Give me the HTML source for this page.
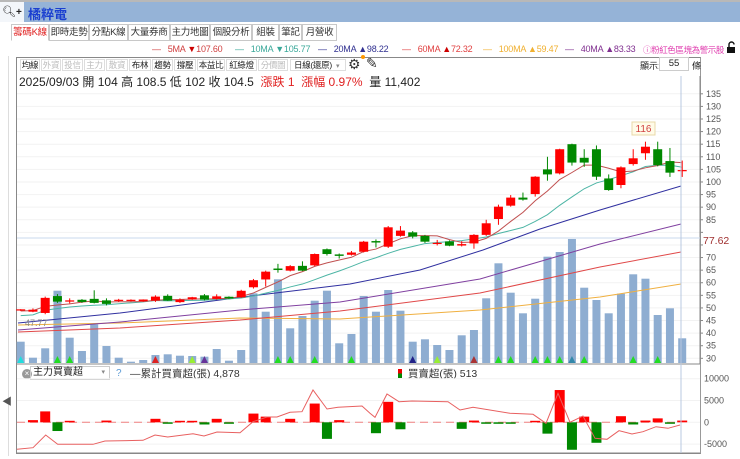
<!DOCTYPE html>
<html><head><meta charset="utf-8"><style>
*{margin:0;padding:0;box-sizing:border-box}
body{width:740px;height:459px;overflow:hidden;background:#fff;font-family:"Liberation Sans","Noto Sans CJK TC",sans-serif;position:relative;color:#222}
.a{position:absolute;white-space:nowrap}
.tab{position:absolute;top:24px;height:17px;border:1px solid #c8c8c8;font-size:9.5px;line-height:15px;text-align:center;background:#fff;color:#333;white-space:nowrap;overflow:hidden;letter-spacing:-0.3px}
.btn{position:absolute;top:59px;height:12px;border:1px solid #ddd;font-size:8.5px;line-height:10px;text-align:center;color:#222;white-space:nowrap;overflow:hidden;letter-spacing:-0.3px}
.g{color:#bbb}
.lg{position:absolute;top:44px;font-size:9px;white-space:nowrap;letter-spacing:-0.2px}
</style></head><body>
<div class="a" style="left:0;top:0;width:740px;height:2px;background:#b8b8b8"></div>
<div class="a" style="left:0;top:2px;width:740px;height:20px;background:#95b3d7"></div>
<div class="a" style="left:0;top:2px;width:24px;height:20px;background:#f3f6fa;font-size:11px;line-height:20px;padding-left:2px">🔍︎<b style="font-size:10px">+</b></div>
<div class="a" style="left:28px;top:4px;font-size:13px;font-weight:bold;color:#1a3fd0">橘粹電</div>

<div class="tab" style="left:11px;width:38px;color:#e02020;border-bottom-color:#fff">籌碼K線</div>
<div class="tab" style="left:49px;width:40px">即時走勢</div>
<div class="tab" style="left:89px;width:39px">分點K線</div>
<div class="tab" style="left:128px;width:42px">大量券商</div>
<div class="tab" style="left:170px;width:40px">主力地圖</div>
<div class="tab" style="left:210px;width:42px">個股分析</div>
<div class="tab" style="left:252px;width:27px">組裝</div>
<div class="tab" style="left:279px;width:23px">筆記</div>
<div class="tab" style="left:302px;width:35px">月營收</div>

<div class="lg" style="left:152px;color:#d04040">—&nbsp;&nbsp; 5MA <span style="color:#c00">▼</span>107.60</div>
<div class="lg" style="left:235px;color:#3aa89a">—&nbsp;&nbsp; 10MA ▼105.77</div>
<div class="lg" style="left:318px;color:#303090">—&nbsp;&nbsp; 20MA ▲98.22</div>
<div class="lg" style="left:402px;color:#e04040">—&nbsp;&nbsp; 60MA <span style="color:#c00">▲</span>72.32</div>
<div class="lg" style="left:483px;color:#f0b030">—&nbsp;&nbsp; 100MA ▲59.47</div>
<div class="lg" style="left:565px;color:#803090">—&nbsp;&nbsp; 40MA ▲83.33</div>
<div class="lg" style="left:643px;color:#e040b0;font-size:8.5px;letter-spacing:-0.4px">ⓘ粉紅色區塊為警示股</div>
<svg class="a" style="left:725px;top:41px" width="12" height="12"><path d="M4 6V3.5a2.5 2.5 0 0 1 5 0" fill="none" stroke="#111" stroke-width="1.4"/><rect x="2" y="6" width="8" height="6" fill="#111"/></svg>

<div class="a" style="left:8px;top:56px;width:1px;height:400px;background:#ddd"></div>
<div class="a" style="left:16px;top:57px;width:685px;height:397px;border:1px solid #888;border-right-color:#999"></div>
<div class="a" style="left:2px;top:393px;font-size:10px;color:#555">◀</div>

<div class="btn" style="left:20px;width:20px">均線</div>
<div class="btn g" style="left:41px;width:20px">外資</div>
<div class="btn g" style="left:62px;width:21px">投信</div>
<div class="btn g" style="left:84px;width:21px">主力</div>
<div class="btn g" style="left:106px;width:22px">散資</div>
<div class="btn" style="left:129px;width:22px">布林</div>
<div class="btn" style="left:152px;width:21px">趨勢</div>
<div class="btn" style="left:174px;width:22px">撐壓</div>
<div class="btn" style="left:197px;width:28px">本益比</div>
<div class="btn" style="left:226px;width:31px">紅綠燈</div>
<div class="btn g" style="left:258px;width:30px">分價圖</div>
<div class="btn" style="left:290px;width:56px;text-align:left;padding-left:3px">日線(還原)&nbsp;&nbsp;<span style="font-size:7px;color:#888">▾</span></div>
<div class="a" style="left:348px;top:56px;font-size:14px;color:#333">⚙</div>
<div class="a" style="left:361px;top:55px;width:4px;height:4px;border-radius:2px;background:#f90"></div>
<div class="a" style="left:366px;top:55px;font-size:14px;color:#333">✎</div>
<div class="a" style="left:640px;top:59px;font-size:9px">顯示:</div>
<div class="a" style="left:659px;top:57px;width:30px;height:14px;border:1px solid #ccc;font-size:9.5px;text-align:center;line-height:12px">55</div>
<div class="a" style="left:692px;top:59px;font-size:9px">條</div>

<div class="a" style="left:19px;top:73px;font-size:12px">2025/09/03 開 104 高 108.5 低 102 收 104.5 &nbsp;<span style="color:#e02020">漲跌 1 &nbsp;漲幅 0.97%</span>&nbsp; 量 11,402</div>

<div class="a" style="left:22px;top:369px;width:10px;height:10px;border-radius:5px;background:#999;color:#fff;font-size:8px;line-height:10px;text-align:center">×</div>
<div class="a" style="left:30px;top:366px;width:80px;height:14px;border:1px solid #ccc;font-size:10px;line-height:12px;padding-left:2px">主力買賣超<span style="position:absolute;right:4px;font-size:7px;color:#888">▾</span></div>
<div class="a" style="left:116px;top:368px;font-size:10px;color:#5b9bd5">?</div>
<div class="a" style="left:130px;top:366px;font-size:10.5px;color:#333">—累計買賣超(張) 4,878</div>
<div class="a" style="left:398px;top:366px;font-size:10.5px;color:#333"><span style="display:inline-block;width:4px;height:9px;background:linear-gradient(#e00 50%,#080 50%);vertical-align:-1px"></span>&nbsp;&nbsp;買賣超(張) 513</div>

<svg id="s" class="a" style="left:0;top:0" width="740" height="459"></svg>
<script>
var O=[[49.2,49.5,48.8,49.2],[48.5,49.8,48.3,49.3],[48,54.5,47.5,54],[54.7,55.5,52,52.5],[52.5,53.8,51.8,53],[53,53.5,52,52.6],[53.6,57,51.8,52],[53,53.8,51,51.6],[53,53.6,52.4,53],[53,53.4,52.6,53],[52.9,53.4,52.5,53.1],[52.9,55,52.4,54.5],[54.8,55.4,52.8,52.9],[52.3,53.8,52,53.3],[53.6,54.4,53.2,54],[55,55.5,53,53.3],[53.6,55.4,53.3,54.6],[54.2,54.6,53.6,54],[54.2,57.2,54,56.8],[58.2,61.5,57.7,61],[61.3,64.8,58.5,64.4],[65.4,67.5,64,65.3],[64.8,67,64.5,66.6],[66.7,68.5,64.6,64.8],[66.9,71.6,66.6,71.4],[73.3,73.6,70.8,71.4],[71,71.6,69.6,70.9],[71.1,72.6,70.8,72],[72.3,76.6,72,76.3],[76.3,77.2,74,76.2],[74.3,82.5,73.8,82],[78.6,82.5,78.3,80.7],[80,80.5,77.6,78.3],[78.6,79,75.8,76.3],[75.6,77,74.8,75.6],[76.4,76.8,74.5,74.7],[75,76.5,74.4,75.1],[75.6,79.3,73.5,79],[79,85,78.6,83.6],[85.3,91,83,90.2],[90.6,94.8,90.2,93.8],[93.8,95.8,92.6,93],[95.2,102.3,94.2,102.1],[105,110,100.5,103],[103.4,113.2,103,113],[115,115.2,106.5,107.7],[109.6,113,106,107.7],[113,114.5,100.8,102.1],[101.4,103,96.5,96.8],[98.8,106.2,97.5,105.8],[107.1,113,106.5,109.4],[111.4,116,108.8,114],[113,116,106.2,106.7],[108.3,113.5,102,103.7],[104.5,108.5,102,104.5]];
var V=[341.7,357.7,348.3,290.7,337.7,351,324.3,346,357.7,361.7,360,355,354.3,355.7,356,356.7,349,360.7,350,293.3,311.7,279.3,328.3,316,300.7,290.7,343.3,334,296,311.7,290,310.7,341.7,339.3,345,350,335.3,330,298.3,263.3,292.7,313.3,298.7,256.7,252,239,287.7,300,313.3,293.7,274.3,278.7,315,308.3,338.3];
var B=[0,500,2500,-2000,100,0,0,400,0,0,0,800,-300,300,300,-500,800,-100,0,2000,1300,0,800,0,4300,-3800,500,0,0,-2500,4700,-1600,0,0,0,0,-1500,400,-200,-200,-200,0,100,-2600,7400,-6300,1300,-4700,0,1400,-500,400,900,-200,400];
var X=function(i){return 20.7+12.25*i},Y=function(p){return 119+(125-p)*2.519};
var h='';
for(var p=30;p<=135;p+=5){var y=Y(p);h+='<line x1="17" x2="700" y1="'+y+'" y2="'+y+'" stroke="#f2f2f2"/><line x1="700" x2="703" y1="'+y+'" y2="'+y+'" stroke="#888"/>';if(p!=80&&p!=75)h+='<text x="706" y="'+(y+3)+'" font-size="9" fill="#555">'+p+'</text>';}
h+='<line x1="700" x2="700" y1="76" y2="364" stroke="#888"/>';
h+='<text x="703" y="244" font-size="10.5" fill="#a03030">77.62</text><line x1="17" x2="700" y1="238" y2="238" stroke="#c8d8ee"/>';
for(var i=0;i<55;i++)h+='<rect x="'+(X(i)-4)+'" y="'+V[i]+'" width="8" height="'+(363-V[i])+'" fill="#8eadd1"/>';
var tri={0:'#2dd',3:'#2d2',4:'#2d2',11:'#d22',14:'#9e3',15:'#639',21:'#2d2',22:'#2d2',24:'#2d2',27:'#2d2',32:'#228',34:'#9e3',37:'#a33',39:'#2d2',40:'#2d2',42:'#2d2',43:'#2d2',44:'#2d2',45:'#38a',46:'#2d2',50:'#2d2',52:'#2d2'};
for(var k in tri){var x=X(+k);h+='<polygon points="'+(x-3.5)+',363 '+(x+3.5)+',363 '+x+',356" fill="'+tri[k]+'"/>';}
function ma(n,pre){var s='';for(var i=0;i<55;i++){var a=0,c=0;for(var j=Math.max(0,i-n+1);j<=i;j++){a+=O[j][3];c++}var m=a/c;if(i<n-1)m=m-(n-c)*pre;s+=X(i)+','+Y(m)+' '}return s}
h+='<polyline fill="none" stroke="#f0b040" stroke-width="1" points="18,325 120,323 240,318 340,319 480,310 600,297 681,284"/>';
h+='<polyline fill="none" stroke="#e04848" stroke-width="1" points="18,332 120,328 240,320 340,311 480,293 600,267 681,252"/>';
h+='<polyline fill="none" stroke="#8040a0" stroke-width="1" points="18,330 120,322 240,310 340,302 480,279 600,244 681,224"/>';
h+='<polyline fill="none" stroke="#3030a0" stroke-width="1" points="18,323 120,313 243,297 350,284 420,270 483,250 540,229 600,210 681,186"/>';
h+='<polyline fill="none" stroke="#4db5a5" stroke-width="1" points="'+ma(10,0.25)+'"/>';
h+='<polyline fill="none" stroke="#c05050" stroke-width="1" points="'+ma(5,0.1)+'"/>';
for(var i=0;i<55;i++){var d=O[i],x=X(i),up=d[3]>=d[0],c=up?'#f00':'#080';var t=Y(Math.max(d[0],d[3])),b=Y(Math.min(d[0],d[3]));if(b-t<1.2){t-=0.6;b+=0.6}
h+='<line x1="'+x+'" x2="'+x+'" y1="'+Y(d[1])+'" y2="'+Y(d[2])+'" stroke="'+c+'"/><rect x="'+(x-4.5)+'" y="'+t+'" width="9" height="'+(b-t)+'" fill="'+c+'"/>';}
h+='<rect x="632" y="122" width="23" height="13" fill="#fffbe8" stroke="#e8d8a8"/><text x="643.5" y="132" font-size="10" fill="#d04040" text-anchor="middle">116</text>';
h+='<text x="25" y="326" font-size="9" fill="#888">47.77</text>';
h+='<line x1="17" x2="700" y1="364" y2="364" stroke="#888"/><line x1="17" x2="700" y1="453" y2="453" stroke="#888"/>';
var Z=422.3,k5=21.8/5000;
[[10000,'10000'],[5000,'5000'],[0,'0'],[-5000,'-5000']].forEach(function(a){var y=Z-a[0]*k5;h+='<line x1="17" x2="700" y1="'+y+'" y2="'+y+'" stroke="#f2f2f2"/><text x="704" y="'+(y+3)+'" font-size="9" fill="#555">'+a[1]+'</text>'});
h+='<line x1="17" x2="680" y1="'+Z+'" y2="'+Z+'" stroke="#f08080" stroke-dasharray="8,5"/>';
for(var i=0;i<55;i++){if(!B[i])continue;var x=X(i),v=B[i],hh=Math.max(Math.abs(v)*k5,1.5);h+='<rect x="'+(x-5)+'" y="'+(v>0?Z-hh:Z)+'" width="10" height="'+hh+'" fill="'+(v>0?'#f00':'#080')+'"/>';}
h+='<polyline fill="none" stroke="#e86060" stroke-width="1" points="17,449.3 33,447.7 45.7,435 57.7,444.3 93,444.3 105,441 143,440.3 155,435 167.7,437 193,433.7 204,436 217,432 240,432.7 253,421.7 267,417 277,417 290,412.3 302,411.7 313,390 327,409 338,407.3 362,406 370,413.3 375,417.3 387,394 399,401.7 412,401 448,401.7 460,410 473,407.3 510,413.3 533,414.3 546,423.3 558,393.3 570,422.3 583,416 595,438.3 607,439.3 619,430.7 632,434 643,431.7 656,426.7 668,428.3 680,425"/>';
h+='<line x1="681" x2="681" y1="76" y2="453" stroke="#b8c8e0"/>';
document.getElementById('s').innerHTML=h;
</script>
</body></html>
